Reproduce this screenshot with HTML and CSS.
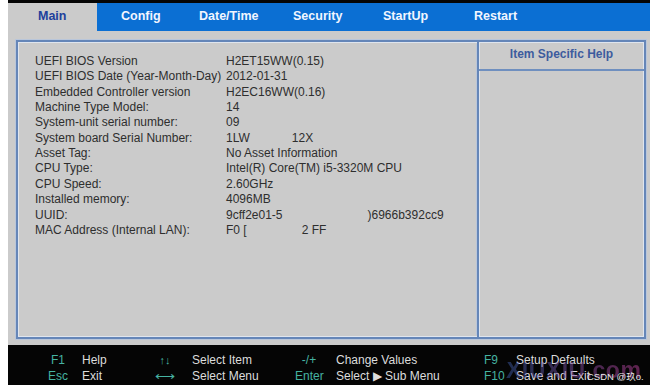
FILE: index.html
```html
<!DOCTYPE html>
<html>
<head>
<meta charset="utf-8">
<link rel="stylesheet" href="styles.css">
</head>
<body>
<div class="screen">
  <div class="topstrip"></div>
  <nav class="tabs">
    <div class="tab tab-main active">Main</div>
    <div class="tab tab-config">Config</div>
    <div class="tab tab-date">Date/Time</div>
    <div class="tab tab-sec">Security</div>
    <div class="tab tab-start">StartUp</div>
    <div class="tab tab-restart">Restart</div>
  </nav>
  <div class="content">
    <div class="panel">
      <div class="info">
        <div class="row"><span class="label">UEFI BIOS Version</span><span class="value">H2ET15WW(0.15)</span></div>
        <div class="row"><span class="label">UEFI BIOS Date (Year-Month-Day)</span><span class="value">2012-01-31</span></div>
        <div class="row"><span class="label">Embedded Controller version</span><span class="value">H2EC16WW(0.16)</span></div>
        <div class="row"><span class="label">Machine Type Model:</span><span class="value">14</span></div>
        <div class="row"><span class="label">System-unit serial number:</span><span class="value">09</span></div>
        <div class="row"><span class="label">System board Serial Number:</span><span class="value">1LW<span class="gap gap-sb"></span>12X</span></div>
        <div class="row"><span class="label">Asset Tag:</span><span class="value">No Asset Information</span></div>
        <div class="row"><span class="label">CPU Type:</span><span class="value">Intel(R) Core(TM) i5-3320M CPU</span></div>
        <div class="row"><span class="label">CPU Speed:</span><span class="value">2.60GHz</span></div>
        <div class="row"><span class="label">Installed memory:</span><span class="value">4096MB</span></div>
        <div class="row"><span class="label">UUID:</span><span class="value">9cff2e01-5<span class="gap gap-uuid"></span>)6966b392cc9</span></div>
        <div class="row"><span class="label">MAC Address (Internal LAN):</span><span class="value">F0 [<span class="gap gap-mac"></span>2 FF</span></div>
      </div>
      <div class="help">
        <div class="help-title">Item Specific Help</div>
        <div class="help-body"></div>
      </div>
    </div>
  </div>
  <footer class="footer">
    <span class="key c1">F1</span><span class="desc c2">Help</span>
    <span class="key c3">↑↓</span><span class="desc c4">Select Item</span>
    <span class="key c5">-/+</span><span class="desc c6">Change Values</span>
    <span class="key c7">F9</span><span class="desc c8">Setup Defaults</span>
    <span class="key c1">Esc</span><span class="desc c2">Exit</span>
    <span class="key c3 arrow">⟷</span><span class="desc c4">Select Menu</span>
    <span class="key c5">Enter</span><span class="desc c6">Select ▶ Sub Menu</span>
    <span class="key c7">F10</span><span class="desc c8">Save and Exit</span>
    <span class="watermark">XIUXIU.com</span>
    <span class="credit">CSDN @玖o.</span>
  </footer>
</div>
</body>
</html>
```

FILE: styles.css
```css
* { box-sizing: border-box; }
html, body { margin: 0; padding: 0; background: #ffffff; }
body { width: 650px; height: 385px; overflow: hidden; font-family: "Liberation Sans", Arial, sans-serif; }

.screen {
  margin-left: 8px;
  width: 642px;
  height: 385px;
  background: #cbcbcb;
  display: flex;
  flex-direction: column;
}

.topstrip { height: 3px; background: #050505; }

.tabs {
  height: 28px;
  background: #0b6fd3;
  display: flex;
  align-items: stretch;
  font-size: 12.5px;
  font-weight: bold;
  color: #f2f6ff;
}
.tab { display: flex; align-items: center; padding-bottom: 1px; }
.tab.active { background: #cbcbcb; color: #213f9c; }
.tab-main { width: 89px; padding-left: 30px; }
.tab-config { width: 102px; padding-left: 24px; }
.tab-date { width: 94px; }
.tab-sec { width: 90px; }
.tab-start { width: 91px; }
.tab-restart { flex: 1; }

.content {
  height: 314px;
  padding: 9px 4px 0 8px;
}

.panel {
  height: 299px;
  border: 2px solid #6586b8;
  box-shadow: inset 0 0 0 1px #dfe5ee, 0 0 0 1px #b9c6da;
  display: grid;
  grid-template-columns: 459px 1fr;
}

.info {
  padding: 12px 0 0 17px;
  font-size: 12px;
  color: #2e2e2e;
}
.row { display: flex; height: 15.4px; line-height: 15.4px; white-space: nowrap; }
.label { width: 191px; }
.gap { display: inline-block; }
.gap-sb { width: 42px; }
.gap-uuid { width: 85px; }
.gap-mac { width: 55px; }

.help {
  border-left: 2px solid #6586b8;
  box-shadow: inset 1px 0 0 #dfe5ee, -3px 0 0 -2px #b9c6da;
  display: flex;
  flex-direction: column;
}
.help-title {
  height: 29px;
  border-bottom: 2px solid #6f8fbf;
  display: flex;
  align-items: center;
  justify-content: center;
  font-size: 12px;
  font-weight: bold;
  color: #3d5c9e;
  padding-bottom: 2px;
}
.help-body { flex: 1; }

.footer {
  margin-top: 3px;
  height: 40px;
  background: #050505;
  position: relative;
  display: grid;
  grid-template-columns: 40px 74px 26px 117px 28px 161px 32px 1fr;
  grid-template-rows: 16px 16px;
  padding: 7px 0 0 30px;
  font-size: 12px;
  line-height: 16px;
  color: #dcdcdc;
  white-space: nowrap;
}
.key { color: #45b3a2; }
.c1 { text-align: center; }
.c2 { padding-left: 4px; }
.c3 { text-align: center; font-size: 11px; }
.arrow { font-size: 14px; }
.c4 { padding-left: 14px; }
.c5 { text-align: center; }
.c6 { padding-left: 13px; }
.c7 { text-align: left; }

.watermark {
  position: absolute;
  left: 498px;
  top: 17px;
  font-size: 23px;
  font-weight: bold;
  letter-spacing: 0.5px;
  color: rgba(70, 110, 200, 0.35);
  background: linear-gradient(90deg, rgba(70,110,200,0.4), rgba(170,60,140,0.55));
  -webkit-background-clip: text;
  background-clip: text;
  -webkit-text-fill-color: transparent;
  pointer-events: none;
}
.credit {
  position: absolute;
  left: 579px;
  top: 24px;
  font-size: 9.5px;
  color: #e8e8e8;
  font-family: "Liberation Sans", "Noto Sans CJK SC", sans-serif;
}
```
